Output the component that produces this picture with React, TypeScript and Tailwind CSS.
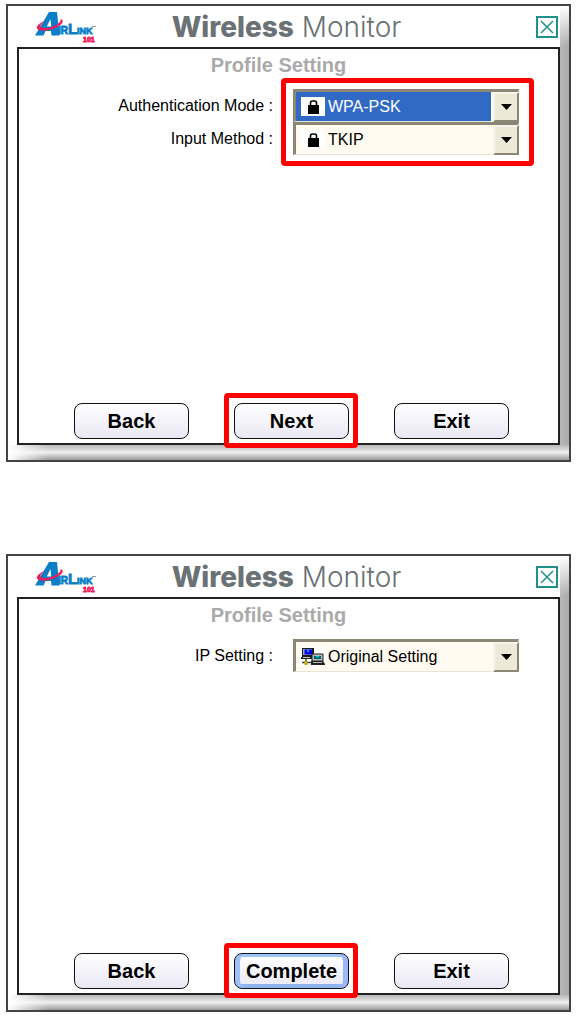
import type { ReactNode } from 'react';

interface DropdownProps {
  id: string;
  label: string;
  options: string[];
  icon: ReactNode;
  selected?: boolean;
}

const AirLinkLogo = () => (
  <svg width="64" height="32" viewBox="0 0 64 32" role="img" aria-label="AirLink 101">
    <path d="M14 1H22L24.500 24.500H16.500L16 20H10.500L8.500 24.500H0Z" fill="#0a7fc6" />
    <path d="M15.500 8L11.800 15.500H16.200Z" fill="#fff" />
    <path
      d="M25 8C30 9 28 13.500 21 16.500C13 20.500 3.500 20.500 2 17.500C1 14.500 6 11 11 9.500C6.500 12.500 4.500 14.500 6 16.300C8.500 18 16 17 21 14C25 11.500 26.500 9.500 25 8Z"
      fill="#f21b5b"
    />
    <g fill="#0a7fc6" stroke="#0a7fc6" strokeWidth="0.800" fontFamily="Liberation Sans, sans-serif" fontWeight="700">
      <text x="23" y="23" fontSize="10">IR</text>
      <text x="33" y="23" fontSize="15">L</text>
      <text x="42" y="23" fontSize="9">INK</text>
    </g>
    <text x="48" y="31" fontSize="7" fill="#f21b5b" stroke="#f21b5b" strokeWidth="0.800" fontFamily="Liberation Sans, sans-serif" fontWeight="700">
      101
    </text>
    <path d="M57 15.500H61" stroke="#999" strokeWidth="1" />
  </svg>
);

const LockIcon = () => (
  <svg width="24" height="19" viewBox="0 0 24 19" className="bg-white">
    <path d="M9.500 9V6Q9.500 4 11.500 4H13.500Q15.500 4 15.500 6V9" fill="none" stroke="#000" strokeWidth="1.600" />
    <path d="M7 8H18V17H7Z" fill="#000" />
  </svg>
);

const NetworkIcon = () => (
  <svg width="24" height="19" viewBox="0 0 24 19" className="bg-white">
    <path d="M1 1H13V10H1Z" fill="#1c1c1c" />
    <path d="M2 2H11V8H2Z" fill="#a8a8c0" />
    <path d="M3.500 2.500H11V7.500H3.500Z" fill="#0000e8" />
    <path d="M6 3H8V5H6Z" fill="#00a8ff" />
    <path d="M0 10H12V12H0Z" fill="#222" />
    <path d="M2 10.500H9" stroke="#ccc" />
    <path d="M5 12V18M1 15.500H12" stroke="#444" strokeWidth="1.500" />
    <path d="M3.500 14H6.500V18H3.500Z" fill="#b9b000" />
    <path d="M11 7H22V14H11Z" fill="#b8b8b8" stroke="#222" />
    <path d="M13 9H20V12H13Z" fill="#00606a" />
    <path d="M15 9H18V10.500H15Z" fill="#00c8c8" />
    <path d="M10 14H22L24 17V18H10Z" fill="#222" />
    <path d="M12 15.500H21" stroke="#b0b0b0" />
  </svg>
);

const Highlight = ({ className }: { className: string }) => (
  <div className={`pointer-events-none absolute rounded-sm border-[5px] border-[#ff0000] ${className}`} />
);

const Dropdown = ({ id, label, options, icon, selected }: DropdownProps) => (
  <div className="flex h-[33px] items-center justify-end gap-5">
    <label htmlFor={id} className="text-base">
      {label}
    </label>
    <div className="relative h-full w-[226px]">
      <select
        id={id}
        className={`size-full appearance-none border-t-[3px] border-r border-b border-l-[3px] border-t-[#8b8774] border-r-[#e8e5d8] border-b-[#e8e5d8] border-l-[#8b8774] pl-8 text-base ${
          selected ? 'bg-[#316ac5] text-white' : 'bg-[#fffbf0] text-black'
        }`}
      >
        {options.map((option) => (
          <option key={option}>{option}</option>
        ))}
      </select>
      <span className="pointer-events-none absolute top-2 left-2">{icon}</span>
      <span className="pointer-events-none absolute top-[3px] right-0 bottom-0 flex w-7 border-l-2 border-[#fffbf0]">
        <span className="flex flex-1 items-center justify-center border-2 border-t-[#f7f5ea] border-r-[#8b8774] border-b-[#8b8774] border-l-[#f7f5ea] bg-[#ece9d8]">
          <svg width="11" height="6" viewBox="0 0 11 6">
            <path d="M0 0H11L5.500 6Z" fill="#000" />
          </svg>
        </span>
      </span>
    </div>
  </div>
);

const WizardButton = ({ children, active }: { children: ReactNode; active?: boolean }) => (
  <button
    type="button"
    className={`h-9 w-[115px] rounded-lg border border-[#111] bg-linear-to-b from-white to-[#e9e8f4] text-xl leading-6 font-bold ${
      active ? 'shadow-[inset_5px_0_0_#9dc0fa,inset_-5px_0_0_#9db8fa,inset_0_3px_0_#9dc4f8,inset_0_-4px_0_#8fb4ee]' : ''
    }`}
  >
    {children}
  </button>
);

const MonitorWindow = ({ children, action, active }: { children: ReactNode; action: string; active?: boolean }) => (
  <section className="relative flex flex-col border-2 border-[#444] bg-white pr-[9px] pb-[15px] pl-[9px]">
    <div className="absolute top-0 right-0 bottom-0 w-[9px] bg-linear-to-r from-[#b8b8b8] to-[#aaaaaa]" />
    <div className="absolute top-0 right-0 h-10 w-[9px] bg-linear-to-b from-white to-transparent" />
    <div className="absolute right-0 bottom-0 left-0 h-[15px] bg-linear-to-b from-[#b8b8b8] via-[#eeeeee] to-[#999999]" />
    <div className="absolute bottom-0 left-0 h-[15px] w-10 bg-linear-to-r from-white to-transparent" />
    <header className="relative flex h-[41px] items-center justify-between pr-[2px] pl-[18px]">
      <AirLinkLogo />
      <h1 className="font-[Inter,sans-serif] text-[28px] leading-8 text-[#6a7275]">
        <span className="font-extrabold">Wireless</span> <span className="font-light">Monitor</span>
      </h1>
      <div className="flex w-[84px] justify-end">
        <button type="button" aria-label="Close" className="flex size-[22px] items-center justify-center border-2 border-[#20918a]">
          <svg width="14" height="14" viewBox="0 0 14 14" stroke="#20918a" strokeWidth="1.500">
            <path d="M1 1L13 13M13 1L1 13" />
          </svg>
        </button>
      </div>
    </header>
    <main className="relative flex min-h-[398px] flex-col border-2 border-[#222] bg-white">
      <h2 className="pt-1 pr-5 text-center text-xl leading-6 font-bold text-[#aaaaaa]">Profile Setting</h2>
      <div className="mt-3 pr-[39px]">{children}</div>
      <div className="mt-auto flex justify-center gap-[45px] pb-1 pl-[6px]">
        <WizardButton>Back</WizardButton>
        <div className="relative">
          <WizardButton active={active}>{action}</WizardButton>
          <Highlight className="-top-[10px] -right-[9px] -bottom-[9px] -left-[10px]" />
        </div>
        <WizardButton>Exit</WizardButton>
      </div>
    </main>
  </section>
);

export default function App() {
  return (
    <div className="flex min-h-screen flex-col gap-[92px] bg-white pt-1 pr-[9px] pb-1 pl-[6px] font-[Liberation_Sans,sans-serif] text-black">
      <MonitorWindow action="Next">
        <div className="relative">
          <Dropdown id="auth" label="Authentication Mode :" options={['WPA-PSK']} icon={<LockIcon />} selected />
          <Dropdown id="method" label="Input Method :" options={['TKIP']} icon={<LockIcon />} />
          <Highlight className="right-6 -top-[11px] -bottom-[11px] w-[253px] -mr-[39px]" />
        </div>
      </MonitorWindow>
      <MonitorWindow action="Complete" active>
        <Dropdown id="ip" label="IP Setting :" options={['Original Setting']} icon={<NetworkIcon />} />
      </MonitorWindow>
    </div>
  );
}
